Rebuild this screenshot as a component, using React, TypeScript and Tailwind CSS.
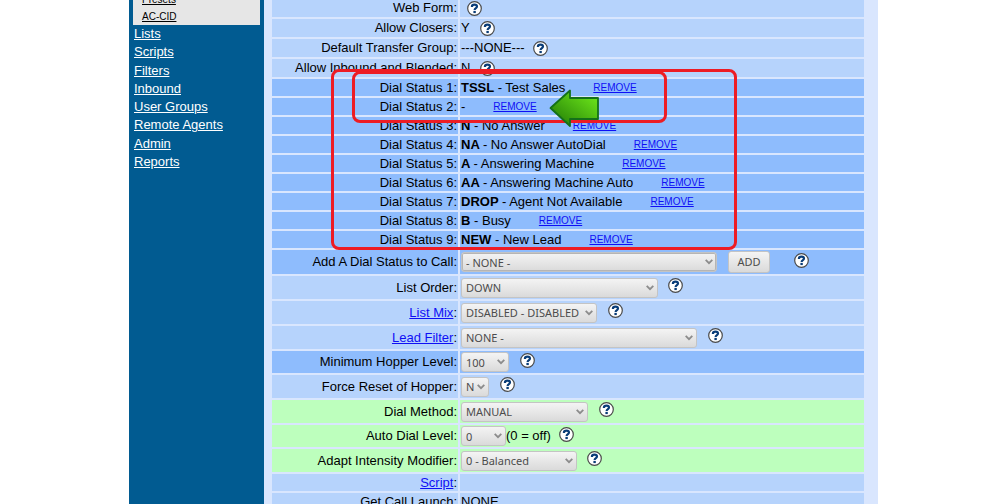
import type { ReactNode } from "react"
import clsx from "clsx"

const menuItems = ["Lists", "Scripts", "Filters", "Inbound", "User Groups", "Remote Agents", "Admin", "Reports"]

const dialStatuses = [
  { code: "TSSL", name: "Test Sales" },
  { code: "", name: "" },
  { code: "N", name: "No Answer" },
  { code: "NA", name: "No Answer AutoDial" },
  { code: "A", name: "Answering Machine" },
  { code: "AA", name: "Answering Machine Auto" },
  { code: "DROP", name: "Agent Not Available" },
  { code: "B", name: "Busy" },
  { code: "NEW", name: "New Lead" },
]

function Help({ className }: { className?: string }) {
  return (
    <a href="#help" aria-label="Help" className={clsx("shrink-0", className)}>
      <svg width="15" height="15" viewBox="0 0 15 15" className="block">
        <circle cx="7.5" cy="7.5" r="6.8" fill="#fff" stroke="#4a4a4a" strokeWidth="1.2" />
        <path
          d="M4.9 5.9C4.9 4.4 6 3.7 7.5 3.7S10 4.4 10 5.6C10 7.1 7.7 7.1 7.6 9"
          fill="none"
          stroke="#0a3d78"
          strokeWidth="2.2"
        />
        <rect x="6.4" y="9.9" width="2.4" height="2.2" fill="#0a3d78" />
      </svg>
    </a>
  )
}

type SelectProps = { id: string; value: string; width: string; focused?: boolean }

function Select({ id, value, width, focused }: SelectProps) {
  return (
    <div className={clsx("relative h-5 shrink-0", width)}>
      <select
        id={id}
        defaultValue={value}
        className={clsx(
          "block h-5 w-full appearance-none rounded-[3px] border bg-linear-to-b from-[#f4f4f4] to-[#dadada] pt-px pl-1 font-['Noto_Sans',sans-serif] text-[11px] leading-4 text-[#4c4c4c]",
          focused ? "border-[#c4c4c4] inset-ring inset-ring-[#b5b5b5]" : "border-[#c4c4c4]"
        )}
      >
        <option>{value}</option>
      </select>
      <svg
        width="8"
        height="6"
        viewBox="0 0 8 6"
        className="pointer-events-none absolute top-[7px] right-1"
        fill="none"
        stroke="#8c8c8c"
        strokeWidth="1.8"
      >
        <path d="M0.7 0.8L4 4.2L7.3 0.8" />
      </svg>
    </div>
  )
}

type RowProps = { label: ReactNode; color: string; height: string; htmlFor?: string; children?: ReactNode }

function Row({ label, color, height, htmlFor, children }: RowProps) {
  return (
    <tr className={height}>
      <th scope="row" className={clsx("p-0 pr-px text-right align-middle font-normal", color)}>
        {htmlFor ? <label htmlFor={htmlFor}>{label}:</label> : <>{label}:</>}
      </th>
      <td className={clsx("p-0 pl-px align-middle", color)}>
        <div className="flex items-center whitespace-pre">{children}</div>
      </td>
    </tr>
  )
}

function TextLink({ children }: { children: ReactNode }) {
  return (
    <a href="#" className="text-[#0f0ff5] underline">
      {children}
    </a>
  )
}

const light = "bg-[#b6d3fc]"
const blue = "bg-[#8ebcfd]"
const green = "bg-[#bdffbd]"

function Sidebar() {
  return (
    <nav className="w-[135px] shrink-0 bg-[#015b91] px-1 text-white">
      <div className="flex h-[25px] flex-col justify-end bg-[#e6e6e6] pl-[9px] text-[10px] leading-[17px] text-black">
        <a href="#presets" className="underline">Presets</a>
        <a href="#ac-cid" className="underline">AC-CID</a>
      </div>
      <ul className="flex h-[146px] flex-col justify-between pl-px leading-[18px]">
        {menuItems.map((item) => (
          <li key={item}>
            <a href="#" className="underline">{item}</a>
          </li>
        ))}
      </ul>
    </nav>
  )
}

export default function App() {
  return (
    <div className="flex h-screen overflow-hidden bg-white pr-[122px] pl-[129px] font-['Liberation_Sans',Arial,sans-serif] text-[13px] leading-4 text-black">
      <Sidebar />
      <main className="relative min-w-0 flex-1 bg-[#d9e6fe] pr-3 pl-1.5">
        <table className="-mt-[3px] w-full table-fixed border-separate border-spacing-[2px]">
          <colgroup>
            <col className="w-[186px]" />
            <col />
          </colgroup>
          <tbody>
            <Row label="Web Form" color={light} height="h-[18px]">
              <Help className="ml-1.5" />
            </Row>
            <Row label="Allow Closers" color={light} height="h-[18px]">
              Y<Help className="ml-2.5" />
            </Row>
            <Row label="Default Transfer Group" color={light} height="h-[18px]">
              ---NONE---<Help className="ml-2" />
            </Row>
            <Row label="Allow Inbound and Blended" color={light} height="h-[18px]">
              N<Help className="ml-2.5" />
            </Row>
            {dialStatuses.map((status, i) => (
              <Row key={i} label={`Dial Status ${i + 1}`} color={blue} height="h-[17px]">
                {status.code && <b>{status.code} </b>}
                {status.name ? `- ${status.name}` : "-"}
                <a href="#remove" className="ml-7 pt-px text-[10px] text-[#0f0ff5] underline">
                  REMOVE
                </a>
              </Row>
            ))}
            <Row label="Add A Dial Status to Call" htmlFor="dial_status" color={blue} height="h-6">
              <Select id="dial_status" value="- NONE -" width="w-[256px]" focused />
              <button
                type="button"
                className="ml-[11px] h-[22px] w-[42px] rounded-[3px] border border-[#c4c4c4] bg-linear-to-b from-[#f4f4f4] to-[#dadada] font-['Noto_Sans',sans-serif] text-[11px] text-[#4c4c4c]"
              >
                ADD
              </button>
              <Help className="mb-1 ml-6" />
            </Row>
            <Row label="List Order" htmlFor="list_order" color={light} height="h-[23px]">
              <Select id="list_order" value="DOWN" width="w-[197px]" />
              <Help className="mb-1 ml-2.5" />
            </Row>
            <Row label={<TextLink>List Mix</TextLink>} htmlFor="list_mix" color={light} height="h-[23px]">
              <Select id="list_mix" value="DISABLED - DISABLED" width="w-[136px]" />
              <Help className="mb-1 ml-[11px]" />
            </Row>
            <Row label={<TextLink>Lead Filter</TextLink>} htmlFor="lead_filter" color={light} height="h-[23px]">
              <Select id="lead_filter" value="NONE -" width="w-[236px]" />
              <Help className="mb-1 ml-[11px]" />
            </Row>
            <Row label="Minimum Hopper Level" htmlFor="hopper_level" color={blue} height="h-[22px]">
              <Select id="hopper_level" value="100" width="w-12" />
              <Help className="mb-1 ml-[11px]" />
            </Row>
            <Row label="Force Reset of Hopper" htmlFor="reset_hopper" color={light} height="h-[23px]">
              <Select id="reset_hopper" value="N" width="w-7" />
              <Help className="mb-1 ml-[11px]" />
            </Row>
            <Row label="Dial Method" htmlFor="dial_method" color={green} height="h-[23px]">
              <Select id="dial_method" value="MANUAL" width="w-[127px]" />
              <Help className="mb-1 ml-[11px]" />
            </Row>
            <Row label="Auto Dial Level" htmlFor="dial_level" color={green} height="h-[22px]">
              <Select id="dial_level" value="0" width="w-[45px]" />
              <span>(0 = off)</span>
              <Help className="mb-1 ml-2" />
            </Row>
            <Row label="Adapt Intensity Modifier" htmlFor="intensity" color={green} height="h-[23px]">
              <Select id="intensity" value="0 - Balanced" width="w-[116px]" />
              <Help className="mb-1 ml-2.5" />
            </Row>
            <Row label={<TextLink>Script</TextLink>} color={light} height="h-[17px]" />
            <Row label="Get Call Launch" color={light} height="h-[17px]">
              NONE
            </Row>
          </tbody>
        </table>

        {/* callouts drawn over the dial status rows */}
        <div className="pointer-events-none absolute top-[69px] left-[67px] h-[181px] w-[406px] rounded-lg border-3 border-[#ed1c24]" />
        <div className="pointer-events-none absolute top-[71px] left-[88px] h-[52px] w-[315px] rounded-lg border-3 border-[#ed1c24]" />
        <svg
          width="52"
          height="40"
          viewBox="0 0 52 40"
          className="pointer-events-none absolute top-[88px] left-[285px]"
        >
          <defs>
            <linearGradient id="arrow" x1="0" y1="1" x2="1" y2="0">
              <stop offset="0.2" stopColor="#2f8f0a" />
              <stop offset="1" stopColor="#74f01c" />
            </linearGradient>
          </defs>
          <path
            d="M1.5 20L21 2.5V10H49V31H21V38Z"
            fill="url(#arrow)"
            stroke="#14701a"
            strokeWidth="1.8"
            strokeLinejoin="round"
          />
        </svg>
      </main>
    </div>
  )
}
